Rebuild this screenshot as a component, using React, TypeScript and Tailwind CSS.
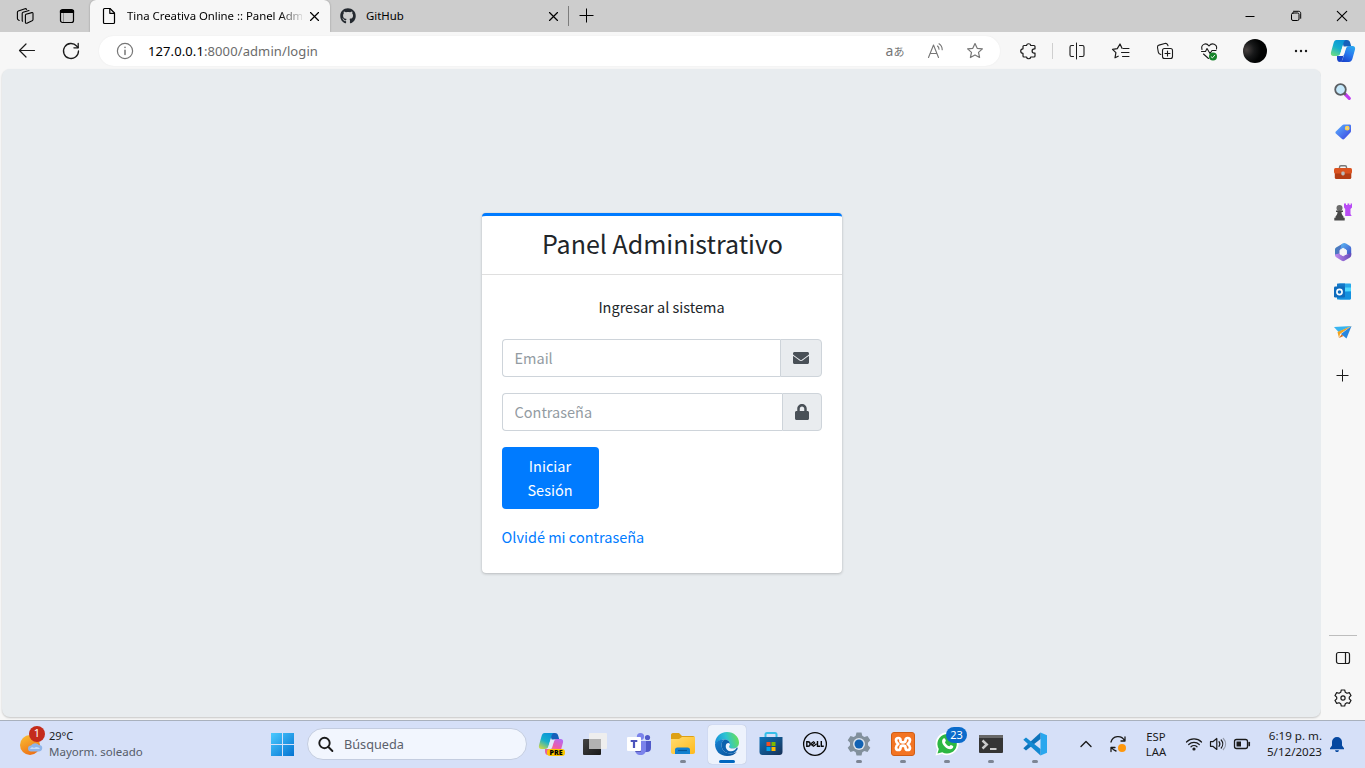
import React from "react";
import { FaEnvelope, FaGithub, FaLock } from "react-icons/fa";

const ui = "font-['Noto_Sans','Open_Sans',sans-serif]";
const web = "font-['Noto_Sans_CJK_SC',sans-serif]";

type IconProps = { children: React.ReactNode; className?: string; sw?: number };

function Icon({ children, className = "", sw = 1.1 }: IconProps) {
  return (
    <svg
      width="24"
      height="24"
      viewBox="0 0 24 24"
      fill="none"
      stroke="currentColor"
      strokeWidth={sw}
      strokeLinecap="round"
      strokeLinejoin="round"
      className={`shrink-0 ${className}`}
    >
      {children}
    </svg>
  );
}

const starPath =
  "M12 4.6l2.2 4.7 5.2.6-3.9 3.5 1.1 5.1-4.6-2.6-4.6 2.6 1.1-5.1-3.9-3.5 5.2-.6z";

function CloseIcon({ size = 4, center = 12.5 }: { size?: number; center?: number }) {
  const a = center - size;
  const b = center + size;
  return (
    <Icon sw={1.15}>
      <path d={`M${a} ${a}L${b} ${b}M${b} ${a}L${a} ${b}`} />
    </Icon>
  );
}

function TabStrip() {
  return (
    <div className="flex h-8 items-center bg-[#cdcdcd]">
      <div className="flex w-[90px] items-center gap-[18px] pl-[13px]">
        <Icon sw={1.1}>
          <path d="M13 10.2l5.8-1.6c.7-.2 1.2.1 1.2.8v6.1c0 .6-.3 1-.9 1.3l-5.2 2.4c-.8.3-1.5 0-1.5-.8v-6.8c0-.7.2-1.2.6-1.4z" />
          <path d="M9.6 17.2l-.4-.3V9.6c0-.6.3-1.2.9-1.4L16 6.5" />
          <path d="M6.2 16.4c-1-.6-1.800-.9-1.800-2V8.300c0-.7.3-1.200.9-1.400l6.700-2.200c.6-.2 1.200.1 1.600.7" />
        </Icon>
        <Icon sw={1.2}>
          <rect x="5.500" y="5.500" width="13" height="13" rx="2" />
          <path d="M5.500 6.500h13v2h-13z" fill="currentColor" />
          <path d="M8.500 9v9" strokeWidth=".6" opacity=".5" />
        </Icon>
      </div>
      <div className="flex h-8 w-[240px] items-center rounded-t-md bg-[#f7f7f7] pl-[7px] shadow-[0_0_2px_rgba(0,0,0,.3)]">
        <Icon sw={1.2}>
          <path d="M6.500 5.500c0-.6.400-1 1-1h5.500l4.500 4.500v9.500c0 .6-.4 1-1 1h-9c-.6 0-1-.4-1-1z" />
          <path d="M12.800 4.800v4.500h4.500" />
        </Icon>
        <div className={`ml-[6px] w-[175px] whitespace-nowrap text-[11.400px] tracking-[-0.030px] text-black [mask-image:linear-gradient(to_right,black_152px,transparent_178px)] ${ui}`}>
          Tina Creativa Online :: Panel Adm
        </div>
        <CloseIcon />
      </div>
      <div className="flex h-8 w-[238px] items-center rounded-bl-md pl-[10px] text-black">
        <FaGithub className="size-4 shrink-0 text-[#24292f]" />
        <div className={`ml-[10px] w-[175px] text-[11.400px] ${ui}`}>GitHub</div>
        <CloseIcon />
      </div>
      <div className="h-5 w-px bg-[#7c7c7c]" />
      <div className="ml-[5px] flex flex-1">
        <Icon sw={1}><path d="M12.500 4.500v14M5.500 11.500h14" strokeLinecap="butt" /></Icon>
      </div>
      <div className="flex items-center gap-[22px] pr-[11px]">
        <Icon sw={1}><path d="M7.500 12.500h9" strokeLinecap="butt" /></Icon>
        <Icon sw={1}>
          <rect x="7.500" y="9" width="7.500" height="7.500" rx="1.500" />
          <path d="M9.500 7.300h5.200c1.200 0 2 .8 2 2v5" />
        </Icon>
        <CloseIcon size={4.7} center={12} />
      </div>
    </div>
  );
}

function CopilotMark({ pre = false }: { pre?: boolean }) {
  const id = pre ? "p" : "c";
  return (
    <svg width="26" height="26" viewBox="0 0 26 26" className="shrink-0">
      <defs>
        <linearGradient id={`${id}1`} x1=".7" y1="0" x2=".2" y2="1">
          <stop stopColor="#0a93d8" />
          <stop offset=".5" stopColor="#16afcc" />
          <stop offset="1" stopColor={pre ? "#c9d64a" : "#6ddc83"} />
        </linearGradient>
        <linearGradient id={`${id}2`} x1=".8" y1="0" x2=".3" y2="1">
          <stop stopColor={pre ? "#b36af3" : "#2ba8ef"} />
          <stop offset=".5" stopColor={pre ? "#ee5ca8" : "#2878ee"} />
          <stop offset="1" stopColor={pre ? "#fa9b5b" : "#1845ce"} />
        </linearGradient>
      </defs>
      <path d="M12 2h5c2 0 2.800 1.200 3.300 3l1 3.500h-4.200c-1.500 0-2.500.7-3 2z" fill="#1660ba" />
      <path d="M6.500 2H16c-1.400.3-2 1.300-2.400 2.700l-3.200 10.600c-.5 1.800-1.600 2.700-3.400 2.700H3.500C1.300 18 .500 16.500 1 14.300L3.600 5C4.200 3 5 2 6.500 2z" fill={`url(#${id}1)`} />
      <path d="M19.300 8h3.200c2.200 0 3 1.500 2.500 3.600l-2.500 9c-.6 2.300-1.700 3.400-3.700 3.400h-8.600c1.400-.4 2-1.400 2.400-2.700L16 10.500C16.500 8.800 17.500 8 19.300 8z" fill={`url(#${id}2)`} />
      <path d="M7 18h4.200c1.500 0 2-.6 2.500-1.800l-1.200 5c-.5 1.800-1.300 2.800-2.500 2.800-2 0-2.500-1.200-3-3z" fill={pre ? "#e9639b" : "#1945c8"} />
      <path d="M12.600 8.500h5.200c-1.300.3-2 1.200-2.400 2.500l-1.600 5.200c-.4 1.200-1.100 1.800-2.400 1.800H8.700c1-.5 1.500-1.300 1.800-2.500z" fill={pre ? "#e3e9fa" : "#f7f7f7"} />
    </svg>
  );
}

function Toolbar() {
  return (
    <div className="flex h-[37px] items-center bg-[#f7f7f7] pt-px text-[#1b1b1b]">
      <div className="flex w-[99px] gap-[20px] pl-[15px]">
        <Icon sw={1.2}><path d="M4.500 11.500h15M11 5l-6.500 6.500 6.500 6.500" /></Icon>
        <Icon sw={1.3}>
          <path d="M19.500 12A7.500 7.500 0 1 1 17.600 7l1.400 1.500" />
          <path d="M19.200 4.500v4.300h-4.300" />
        </Icon>
      </div>
      <div className="flex h-[30px] w-[901px] items-center rounded-full bg-white pl-[14px] text-[#767676] shadow-[0_0_2px_rgba(0,0,0,.06)]">
        <Icon sw={1.2}>
          <circle cx="12" cy="12" r="7.600" />
          <path d="M12 11.200v4.300M12 8.300v.3" strokeWidth="1.500" />
        </Icon>
        <div className={`ml-[11px] flex-1 pt-px text-[13px] tracking-[0.100px] text-[#6b6b6b] ${ui}`}>
          <span className="text-black">127.0.0.1</span>:8000/admin/login
        </div>
        <div className="flex items-center gap-[16px] pr-[13px]">
          <div className="flex w-6 items-center justify-center leading-none">
            <span className={`text-[14px] ${ui}`}>a</span>
            <span className="font-['Noto_Sans_CJK_JP',sans-serif] text-[11px]">あ</span>
          </div>
          <Icon className="relative left-px">
            <path d="M4.500 18.500L9.500 6l5 12.500M6.200 14.500h6.600" />
            <path d="M13.500 7c1 .8 1.500 1.800 1.500 3.200M15 4.800c2 1.300 3.200 3.200 3.200 6" />
          </Icon>
          <Icon sw={1.2}><path d={starPath} /></Icon>
        </div>
      </div>
      <div className="flex flex-1 items-center pl-[17px]">
        <Icon sw={1.2}>
          <path d="M7 6.500h2.500a2.200 2.200 0 0 1 4.300 0H17c.6 0 1 .4 1 1v2.300h-.7a2.200 2.200 0 0 0 0 4.400h.7v2.800c0 .6-.4 1-1 1h-3.200a2.200 2.200 0 0 1-4.300 0H7c-.6 0-1-.4-1-1v-2.600a2.300 2.300 0 0 1 0-4.600V7.500c0-.6.4-1 1-1z" />
        </Icon>
        <div className="ml-[11px] mr-[12px] h-4 w-px bg-[#cfcfcf]" />
        <Icon sw={1.1}>
          <path d="M8.500 6.500h-2c-1 0-1.500.5-1.500 1.500v8c0 1 .5 1.500 1.500 1.500h2M14.500 6.500h3c1 0 1.500.5 1.500 1.500v8c0 1-.5 1.500-1.500 1.500h-3" />
          <path d="M11.500 4v16" strokeWidth="1" />
        </Icon>
        <Icon className="ml-[20px]" sw={1.2}>
          <path d="M9.200 17.200L6 18.800l.9-5.100L3.500 10.300l4.800-.7L11 5l2 4.300" />
          <path d="M14 9.500h6M12.500 13.500h7.500M13.500 17.500h6.500" strokeWidth="1" />
        </Icon>
        <Icon className="ml-[20px]" sw={1.1}>
          <rect x="9.500" y="9.500" width="10" height="10" rx="2" />
          <path d="M14.500 12v5M12 14.500h5M7.800 15.500c-1.500-.4-2.300-1-2.500-2.300L4.500 8.500c-.2-1.300.3-2 1.500-2.400l5.800-1.600c1.300-.3 2.300.1 2.800 1.200l.4 1.100" />
        </Icon>
        <Icon className="ml-[20px]" sw={1.1}>
          <path d="M5 10.500C3.500 5.500 9 3 12 7c3-4 8.500-1.500 7.500 3M4.500 12.500h4L10 9.500l3 5 2-3h4M6.500 15l5 4.500" />
          <circle cx="16" cy="17.500" r="4" fill="#16842a" stroke="none" />
          <path d="M14.200 17.800l1.300 1 2.200-2.600" stroke="white" strokeWidth=".9" />
        </Icon>
        <div className="ml-[22px] size-6 rounded-full bg-[radial-gradient(circle_at_15%_45%,#484241_0%,#171819_32%,#020303_60%)]" />
        <Icon className="ml-[22px]">
          <g fill="currentColor" stroke="none">
            <circle cx="7" cy="12" r="1.200" /><circle cx="12" cy="12" r="1.200" /><circle cx="17" cy="12" r="1.200" />
          </g>
        </Icon>
        <div className="ml-[17px] flex"><CopilotMark /></div>
      </div>
    </div>
  );
}

function SideRail() {
  return (
    <div className="flex w-11 flex-col items-center bg-[#f7f7f7] pt-[11px] text-[#1b1b1b]">
      <div className="flex flex-col gap-4">
        <svg width="24" height="24" viewBox="0 0 24 24">
          <path d="M14 14l4.300 4.300" stroke="#c03bf0" strokeWidth="3.200" strokeLinecap="round" />
          <path d="M13 13l1.700 1.700" stroke="#666" strokeWidth="2" />
          <circle cx="9.500" cy="9.500" r="5.300" fill="#c4e8fb" stroke="#5b5f63" strokeWidth="1.800" />
        </svg>
        <svg width="24" height="24" viewBox="0 0 24 24">
          <defs><linearGradient id="tag" x2="1" y2="1"><stop stopColor="#5cb5ff" /><stop offset="1" stopColor="#3c3fe0" /></linearGradient></defs>
          <path d="M13 4.500h5.500c1 0 1.500.5 1.500 1.500v5c0 .8-.2 1.200-.8 1.800l-5.700 6c-.9.900-1.800.9-2.700 0l-5.700-5c-.9-.8-.9-1.700 0-2.500L11 5.500c.6-.7 1.200-1 2-1z" fill="url(#tag)" />
          <circle cx="16.200" cy="8.200" r="1.700" fill="#d8cfb8" stroke="#ffd34b" strokeWidth="1.400" />
        </svg>
        <svg width="24" height="24" viewBox="0 0 24 24">
          <path d="M8.500 9V7.200c0-1 .6-1.500 1.500-1.500h4c.9 0 1.500.5 1.500 1.500V9" fill="none" stroke="#777" strokeWidth="1.400" />
          <rect x="3.800" y="10" width="16.500" height="9" rx="1.500" fill="#b33d15" />
          <rect x="3" y="8" width="18" height="5.500" rx="1.500" fill="#db5320" />
          <rect x="10.300" y="11.500" width="3.400" height="4" rx="1.400" fill="#bbb" />
        </svg>
        <svg width="24" height="24" viewBox="0 0 24 24">
          <path d="M13 3.500h2v1.500h1.500V3.500h1.800v1.500h1.300V3.500h1.400v4l-1.500 1.500v5l1.200 2h-6.500V9L13 7.500z" fill="#b94bf5" />
          <circle cx="8.500" cy="8" r="3" fill="#6b6b6b" />
          <path d="M5 10.500h7v1.500h-1.500c.1 2 .7 3.300 2 4.500v1.300h1.200V20.500H3.300v-2.700h1.200v-1.300c1.300-1.200 1.900-2.500 2-4.500H5z" fill="#484848" />
        </svg>
        <svg width="24" height="24" viewBox="0 0 24 24">
          <defs>
            <linearGradient id="ma" x2="1" y2="1"><stop stopColor="#3a86b8" /><stop offset="1" stopColor="#6f62d0" /></linearGradient>
            <linearGradient id="mb" x2="1" y2="1"><stop stopColor="#5ab8f5" /><stop offset="1" stopColor="#4150c6" /></linearGradient>
            <linearGradient id="mc" x2="1"><stop stopColor="#c28df0" /><stop offset="1" stopColor="#674ab8" /></linearGradient>
          </defs>
          <path d="M12 3.500L5.500 7.200C4.500 7.800 4 8.500 4 9.500v5.500L12 20z" fill="url(#ma)" />
          <path d="M10.500 4.300L12 3.500c1-.6 2-.5 3 .1l4 2.500c.8.5 1.200 1.200 1.200 2.100v7l-6.700-1.700L9.500 9z" fill="url(#mb)" />
          <path d="M4 14.500l6-1.500 5.500 1.500 4.700-1.500v2.300c0 .9-.4 1.600-1.200 2.100l-5.500 3.400c-.9.5-1.800.5-2.700 0l-5.600-3.500C4.400 16.800 4 16 4 14.500z" fill="url(#mc)" />
          <path d="M12.200 8.300l3.200 1.900v3.700l-3.200 1.900L9 13.900v-3.700z" fill="#f7f7f7" stroke="#f7f7f7" strokeLinejoin="round" />
        </svg>
        <svg width="24" height="24" viewBox="0 0 24 24">
          <path d="M8 4.500c0-.6.400-1 1-1h10c.6 0 1 .4 1 1V18c0 .8-.5 1.500-1.500 1.500h-10z" fill="#28a8ea" />
          <path d="M6 4.500c0-.6.400-1 1-1h7v8H6z" fill="#1478c8" /><path d="M14 7.500h6v4h-6z" fill="#50d9ff" />
          <path d="M6 12l14-.5v6.500c0 .8-.5 1.500-1.500 1.500H7c-.6 0-1-.4-1-1z" fill="#1490df" />
          <rect x="3" y="6.500" width="11" height="11" rx="1.200" fill="#0f6cbd" />
          <circle cx="8.500" cy="12" r="2.600" fill="none" stroke="white" strokeWidth="1.600" />
        </svg>
        <svg width="24" height="24" viewBox="0 0 24 24">
          <path d="M3 7l17.500-1L7.500 12z" fill="#38b4ef" />
          <path d="M6.500 12L20.500 6 9 14l-1 4z" fill="#f3a31d" />
          <path d="M10 14L20.500 6l-5 12.500z" fill="#2786df" />
          <path d="M8 18l2.500-3.500 2 1.500z" fill="#d96b16" />
        </svg>
      </div>
      <Icon className="mt-[20px]" sw={1}><path d="M11.500 5.500v12M5.500 11.500h12" strokeLinecap="butt" /></Icon>
      <div className="mt-[247px] h-px w-7 bg-[#bdbdbd]" />
      <Icon className="mt-[10px]" sw={1.2}>
        <rect x="5.500" y="6.500" width="13" height="11" rx="2" /><path d="M14.500 6.500v11" />
      </Icon>
      <Icon className="mt-[16px]" sw={1.2}>
        <path d="M10.300 4h3.400l.6 2.300 1.700 1 2.300-.7L20 9.500l-1.700 1.600v1.800l1.700 1.600-1.700 2.900-2.300-.7-1.700 1-.6 2.300h-3.400l-.6-2.300-1.700-1-2.300.7L4 14.500l1.700-1.600v-1.800L4 9.500l1.700-2.900 2.300.7 1.700-1z" />
        <circle cx="12" cy="12" r="2.100" />
      </Icon>
    </div>
  );
}

function Field({ label, children }: { label: string; children: React.ReactNode }) {
  return (
    <div className="mb-4 flex h-[38px]">
      <input
        placeholder={label}
        className="min-w-0 flex-1 rounded-l border border-r-0 border-[#ced4da] bg-white px-3 text-[14.500px] leading-6 outline-none placeholder:text-[#939ba2]"
      />
      <div className="flex items-center rounded-r border border-[#ced4da] bg-[#e9ecef] px-3 text-[#495057]">
        {children}
      </div>
    </div>
  );
}

function LoginCard() {
  return (
    <div className={`h-[360px] w-[360px] rounded border-t-[3px] border-[#007bff] bg-white text-[#212529] shadow-[0_0_1px_rgba(0,0,0,.125),0_1px_3px_rgba(0,0,0,.2)] ${web}`}>
      <h1 className="flex h-[59px] items-center justify-center border-b border-[#dfdfdf] pb-[5px] pl-[2px] text-[25px] leading-[34px]">
        Panel Administrativo
      </h1>
      <div className="px-5 pt-5">
        <p className="mb-5 text-center text-[14.500px] leading-6">Ingresar al sistema</p>
        <Field label="Email"><FaEnvelope className="size-4" /></Field>
        <Field label="Contraseña"><FaLock className="h-4 w-[14px]" /></Field>
        <button className="block w-[97px] rounded bg-[#007bff] px-3 py-[7px] text-[14.500px] leading-6 text-white">
          Iniciar Sesión
        </button>
        <a className="mt-4 block text-[14.500px] leading-6 text-[#007bff]">Olvidé mi contraseña</a>
      </div>
    </div>
  );
}

function TaskApp({ children, running = false, active = false }: { children: React.ReactNode; running?: boolean; active?: boolean }) {
  return (
    <div className={`relative flex h-[39px] w-[38px] shrink-0 items-center justify-center rounded pb-px ${active ? "bg-[#edf2fc] shadow-[0_0_1px_rgba(0,0,0,.25)]" : ""}`}>
      {children}
      {running && <span className="absolute bottom-px h-[3px] w-[6px] rounded-full bg-[#7d8594]" />}
      {active && <span className="absolute bottom-px h-[3px] w-4 rounded-full bg-[#0067c0]" />}
    </div>
  );
}

function Svg({ children }: { children: React.ReactNode }) {
  return <svg width="26" height="26" viewBox="0 0 26 26" className="shrink-0">{children}</svg>;
}

function TaskApps() {
  return (
    <div className="ml-[5px] flex items-center gap-[6px]">
      <TaskApp>
        <CopilotMark pre />
        <span className="absolute right-[5px] bottom-[8px] rounded-[3px] bg-[#fdc400] px-[2.500px] font-['Open_Sans',sans-serif] text-[7px] leading-[7px] font-extrabold text-black">PRE</span>
      </TaskApp>
      <TaskApp>
        <Svg>
          <defs><linearGradient id="tv" x2="1" y2="1"><stop stopColor="#444" /><stop offset="1" stopColor="#191919" /></linearGradient></defs>
          <rect x="1" y="8" width="18" height="16" rx="1" fill="url(#tv)" />
          <rect x="7" y="2" width="18" height="16" rx="1" fill="#eee" />
          <path d="M7 8h12v10H7z" fill="#b2b2b2" />
        </Svg>
      </TaskApp>
      <TaskApp>
        <Svg>
          <circle cx="21.500" cy="6.500" r="2.600" fill="#5059c9" /><path d="M18 10h7v7c0 2.500-1.500 4-4 4h-3z" fill="#5059c9" />
          <circle cx="14.500" cy="5.500" r="3.600" fill="#7b83eb" /><path d="M9 10h11v8.500c0 3.500-2 5.500-5.500 5.500S9 22 9 18.500z" fill="#7b83eb" />
          <path d="M9 10h6v11H9.500z" fill="#5558b6" />
          <rect x="1" y="6" width="14" height="14" rx="1" fill="#fff" />
          <path d="M4.700 9h6.600v1.900H9.100V17H6.900v-6.100H4.700z" fill="#4b53bc" />
        </Svg>
      </TaskApp>
      <TaskApp running>
        <Svg>
          <defs><linearGradient id="fold" x2="1" y2="1"><stop stopColor="#ffdc70" /><stop offset="1" stopColor="#ffb91c" /></linearGradient></defs>
          <path d="M1 4c0-1 .5-2 2-2h6l3 3h11c1 0 2 .7 2 2v5H1z" fill="#dda015" />
          <path d="M1 8h8l3-2h13v15c0 1.200-.8 2-2 2H3c-1.200 0-2-.8-2-2z" fill="url(#fold)" />
          <path d="M5 23v-4c0-1.500.7-2.500 2.500-2.500h10c1.800 0 2.500 1 2.500 2.500v4z" fill="#1180d0" />
          <path d="M8 19.500h9" stroke="#075899" strokeWidth="1.200" />
        </Svg>
      </TaskApp>
      <TaskApp active>
        <Svg>
          <defs>
            <linearGradient id="e1" x1="0" y1=".6" x2="1" y2=".4"><stop stopColor="#178edb" /><stop offset=".5" stopColor="#2cc3d3" /><stop offset="1" stopColor="#67df56" /></linearGradient>
            <linearGradient id="e2" x1="0" y1="0" x2="1" y2="1"><stop stopColor="#1782d3" /><stop offset="1" stopColor="#084e95" /></linearGradient>
          </defs>
          <path d="M1 13C1 6 6 1 13 1s12 5 12 10.500c0 4-3 6-6.500 6-2 0-3.500-.7-3.500-1.800 0-.8 1-1.200 1-2.700 0-2.500-2.500-4.500-5.500-4.500C6 8.500 2.500 11 1 13z" fill="url(#e1)" />
          <path d="M1 13c1.500-3 5-4.700 9.500-4.500-2 1-3 3-3 5.500 0 5 4 8.500 9.500 8.500 2.500 0 4.500-.7 6-2C21 23.500 17.500 25 13 25 6 25 1 20 1 13z" fill="url(#e2)" />
          <path d="M10.500 8.500c3 0 5.500 2 5.500 4.500 0 1.500-1 1.900-1 2.700 0 1.100 1.500 1.800 3.500 1.800 1.800 0 3.400-.5 4.500-1.300.4.200 1 1 .5 2-1.500 2.700-4 4.300-6.500 4.300-5.500 0-9.500-3.500-9.500-8.500 0-2.500 1-4.500 3-5.500z" fill="#0b60ad" />
          <path d="M16 13c0 1.500-1 1.900-1 2.700 0 1.100 1.500 1.800 3.500 1.800 1.800 0 3.400-.5 4.500-1.300-1.500 3-4.200 4.600-7 4-3-.6-5-3.500-4-6.500.6-1.700 2.500-2.700 4-.7z" fill="#edf2fc" />
        </Svg>
      </TaskApp>
      <TaskApp>
        <Svg>
          <defs><linearGradient id="shop" x2="1" y2="1"><stop stopColor="#0e75bb" /><stop offset="1" stopColor="#173057" /></linearGradient></defs>
          <path d="M7.500 7V3.500c0-1 .5-1.500 1.500-1.500h8c1 0 1.500.5 1.500 1.500V7" fill="none" stroke="#36bfe9" strokeWidth="2" />
          <path d="M1.500 6h23v15c0 2-1.200 3-3 3h-17c-1.800 0-3-1-3-3z" fill="url(#shop)" />
          <path d="M8.500 11h4v4h-4z" fill="#f25022" /><path d="M13.500 11h4v4h-4z" fill="#7fba00" /><path d="M8.500 16h4v4h-4z" fill="#00a4ef" /><path d="M13.500 16h4v4h-4z" fill="#ffb900" />
        </Svg>
      </TaskApp>
      <TaskApp>
        <Svg>
          <circle cx="13" cy="13" r="11.400" fill="none" stroke="#080808" strokeWidth="1.300" />
          <g fill="none" stroke="#080808" strokeWidth="1.400">
            <path d="M4.800 10.800h1.200c2.800 0 2.800 4.400 0 4.400H4.800z" />
            <path d="M8.500 13l3-2.300 1.500 1.200M8.500 13l3 2.300 3.200-2.500M10.300 13.700l2.700-2" strokeWidth="1.100" />
            <path d="M15.500 10v5.200H18M19.300 10v5.200h2.500" />
          </g>
        </Svg>
      </TaskApp>
      <TaskApp running>
        <Svg>
          <path d="M10.500 1.500h5l.8 3.300 2 1.100 3.200-1 2.800 4.300-2.300 2.500v2.600l2.300 2.500-2.800 4.300-3.200-1-2 1.100-.8 3.300h-5l-.8-3.300-2-1.100-3.200 1-2.800-4.300L4 14.300v-2.600L1.700 9.200l2.800-4.300 3.200 1 2-1.100z" fill="#82909c" />
          <circle cx="13" cy="13" r="6" fill="#dce3ec" /><circle cx="13" cy="13" r="4.500" fill="#1262b3" />
        </Svg>
      </TaskApp>
      <TaskApp running>
        <Svg>
          <rect x="1.500" y="1.500" width="23" height="23" rx="2.500" fill="#f37423" stroke="#cf5d15" />
          <g fill="none" stroke="white" strokeWidth="2.700" strokeLinecap="round" strokeLinejoin="round">
            <path d="M10.500 10.500V9.300c0-1.300-1-2.300-2.200-2.300S6 8 6 9.300c0 1.500.8 2.700 2.300 3.700C6.800 14 6 15.200 6 16.700 6 18 7 19 8.300 19s2.200-1 2.200-2.300v-.2c0-1.200 1-1.800 2.500-1.800s2.500.6 2.500 1.800v.2c0 1.300 1 2.300 2.200 2.300s2.300-1 2.300-2.300c0-1.500-.8-2.700-2.300-3.700 1.500-1 2.300-2.200 2.300-3.700 0-1.300-1-2.300-2.300-2.300s-2.200 1-2.200 2.300v.2c0 1.200-1 1.800-2.500 1.800s-2.500-.5-2.500-1.500z" />
          </g>
        </Svg>
      </TaskApp>
      <TaskApp running>
        <Svg>
          <path d="M1.500 24.500l1.700-6A11.500 11.500 0 1 1 8 23z" fill="#fff" />
          <path d="M3.500 22.500l1.300-4.600A9.700 9.700 0 1 1 8.300 21.300z" fill="#2db742" />
          <path d="M9.500 7.500c.5-.5 1.300-.4 1.600.3l.7 1.700c.2.500-.9 1.500-.8 1.900 1 1.900 2.300 3 4.200 3.800.5.100 1.300-1.300 1.800-1.100l2 .9c.8.4-.1 2.200-.7 2.600-4.200 2.400-10.700-3.800-10.200-7.700.1-.9.700-1.800 1.400-2.400z" fill="#fff" />
        </Svg>
        <span className={`absolute top-[2px] -right-px flex h-4 w-[21px] items-center justify-center rounded-full bg-[#0b6bcb] text-[11px] text-white ${ui}`}>23</span>
      </TaskApp>
      <TaskApp running>
        <Svg>
          <rect x="1" y="4" width="24" height="18" rx="1" fill="#353535" /><path d="M1 5c0-.6.400-1 1-1h22c.6 0 1 .4 1 1v2H1z" fill="#686868" />
          <path d="M4.500 9.500l4.300 4-4.300 4" fill="none" stroke="#ccc" strokeWidth="2.400" /><path d="M12 18h6.500" stroke="white" strokeWidth="1.500" />
        </Svg>
      </TaskApp>
      <TaskApp running>
        <Svg>
          <path d="M18.500 1.500L25 4.300v17.400l-6.500 2.800z" fill="#2aa7ee" />
          <path d="M18.500 1.500V8L4 19.500 1.300 17.300z" fill="#0d73bb" />
          <path d="M1.300 8.700L4 6.500 18.500 18v6.500z" fill="#1388d1" />
        </Svg>
      </TaskApp>
    </div>
  );
}

function Taskbar() {
  return (
    <div className={`flex h-12 items-center border-t border-[#a9b1bd] bg-[#d6e0f8] text-[#1b1b1b] ${ui}`}>
      <div className="relative ml-[18px] flex w-[31px] pb-[4px]">
        <svg width="28" height="30" viewBox="0 0 28 30">
          <defs><linearGradient id="sun" x2=".5" y2="1"><stop stopColor="#fac135" /><stop offset="1" stopColor="#ee7417" /></linearGradient></defs>
          <circle cx="12" cy="17" r="10" fill="url(#sun)" />
          <path d="M13 23.500a3 3 0 0 1 0-6 5 5 0 0 1 8-.5c2.500 0 3.500 1.500 3.200 3.500-.2 2-1.700 3-3.500 3z" fill="#8fb5ea" />
          <path d="M12 21c1-2 3-2 4-1 2-2 5-1 6 1z" fill="#c8dcf8" />
        </svg>
        <span className="absolute top-[-2px] left-[11px] flex size-4 items-center justify-center rounded-full bg-[#c42b1c] text-[11px] text-white">1</span>
      </div>
      <div className="w-[222px] pb-[2px] text-[11.500px] leading-4">
        <div className="text-[11px]">29°C</div>
        <div className="text-[#555c69]">Mayorm. soleado</div>
      </div>
      <svg width="24" height="24" viewBox="0 0 24 24">
        <defs><linearGradient id="win" gradientUnits="userSpaceOnUse" x1="0" y1="0" x2="24" y2="24"><stop stopColor="#4bcaff" /><stop offset="1" stopColor="#006fd0" /></linearGradient></defs>
        <path d="M0 0h11v11H0zM12 0h11v11H12zM0 12h11v11H0zM12 12h11v11H12z" fill="url(#win)" />
      </svg>
      <div className="mb-px ml-[12px] flex h-8 w-[220px] items-center rounded-full border border-[#c4cde0] bg-[#f2f6fe] pl-[5px]">
        <Icon sw={1.9}><circle cx="11.500" cy="11" r="5.200" /><path d="M15.400 15l4 4" /></Icon>
        <span className="ml-[7px] pt-px text-[12.700px] text-[#5b606b]">Búsqueda</span>
      </div>
      <TaskApps />
      <div className="ml-[20px] flex w-[70px] items-center gap-[8px] pb-px">
        <Icon sw={1.4}><path d="M7 14.500l5-5 5 5" /></Icon>
        <Icon sw={1.3}>
          <path d="M5 10a7.300 7.300 0 0 1 13.500-1.500M19 5v4h-4M10 19a7.500 7.500 0 0 1-4.500-3.500M5 19.500v-4h4" />
          <circle cx="16" cy="16" r="4" fill="#ff980d" stroke="none" />
        </Icon>
      </div>
      <div className="w-[24px] pb-[2px] text-center text-[11.300px] leading-[15px]"><div>ESP</div><div>LAA</div></div>
      <div className="ml-[14px] flex items-center pb-px">
        <Icon sw={1.2}>
          <path d="M4.500 10a10.600 10.600 0 0 1 15 0M6.700 12.500a7.500 7.500 0 0 1 10.600 0M9 14.800a4.300 4.300 0 0 1 6 0" />
          <circle cx="12" cy="17" r="1" fill="currentColor" />
        </Icon>
        <Icon sw={1.2}>
          <path d="M4.500 9.700h2.300l4-3.200v11l-4-3.200H4.500zM13 9.700c1 1.300 1 3.300 0 4.600M15.200 8c2 2.300 2 5.700 0 8" />
          <path d="M17.300 6.500c3 3.300 3 7.700 0 11" opacity=".35" />
        </Icon>
        <Icon sw={1.3}>
          <rect x="4.500" y="7.500" width="13" height="9" rx="2" /><path d="M6.500 9.500H11v5H6.500z" fill="currentColor" stroke="none" /><path d="M19.200 10.500v3" strokeWidth="1.700" />
        </Icon>
      </div>
      <div className="ml-auto w-[64px] pb-[2px] text-right text-[11.600px] leading-4 whitespace-nowrap"><div>6:19 p. m.</div><div>5/12/2023</div></div>
      <svg width="24" height="24" viewBox="0 0 24 24" className="mr-[16px] ml-[3px] text-[#0648a0]" fill="currentColor">
        <path d="M12 4a5 5 0 0 0-5 5v3.500L5 15.300v1h14v-1l-2-2.800V9a5 5 0 0 0-5-5zM10 17.300h4c-.3 1.300-1 1.800-2 1.800s-1.700-.5-2-1.800z" />
      </svg>
    </div>
  );
}

export default function App() {
  return (
    <div className="flex h-[768px] w-[1365px] flex-col overflow-hidden bg-[#f7f7f7]">
      <TabStrip />
      <Toolbar />
      <div className="flex h-[651px]">
        <main className="ml-[2px] flex h-[648px] w-[1319px] justify-center rounded-lg bg-[#e8ecef] pt-[144px] shadow-[0_1px_2px_rgba(0,0,0,.2)]">
          <LoginCard />
        </main>
        <SideRail />
      </div>
      <Taskbar />
    </div>
  );
}
